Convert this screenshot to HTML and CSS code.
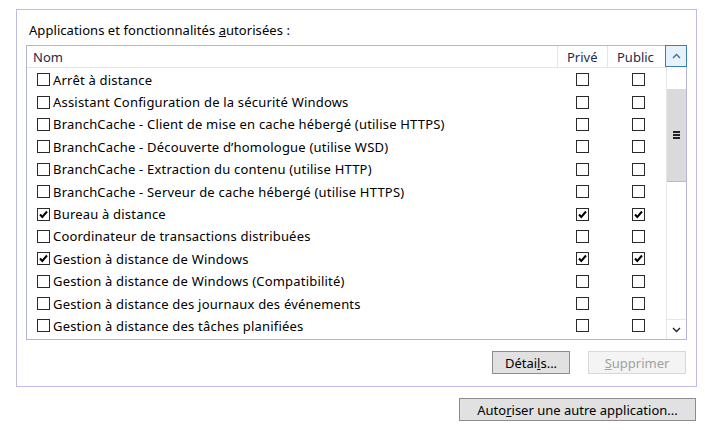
FILE: index.html
```html
<!DOCTYPE html>
<html lang="fr">
<head>
<meta charset="utf-8">
<title>Applications autorisées</title>
<link rel="stylesheet" href="styles.css">
</head>
<body>
<div class="page">
  <div class="group">
    <div class="title">Applications et fonctionnalités <u>a</u>utorisées :</div>
    <div class="list">
      <div class="table">
        <div class="head">
          <div class="c-name">Nom</div>
          <div class="c-priv">Privé</div>
          <div class="c-pub">Public</div>
        </div>
        <div class="row"><div class="c-name"><span class="cb"></span>Arrêt à distance</div><div class="c-priv"><span class="cb"></span></div><div class="c-pub"><span class="cb"></span></div></div>
        <div class="row"><div class="c-name"><span class="cb"></span>Assistant Configuration de la sécurité Windows</div><div class="c-priv"><span class="cb"></span></div><div class="c-pub"><span class="cb"></span></div></div>
        <div class="row"><div class="c-name"><span class="cb"></span>BranchCache - Client de mise en cache hébergé (utilise HTTPS)</div><div class="c-priv"><span class="cb"></span></div><div class="c-pub"><span class="cb"></span></div></div>
        <div class="row"><div class="c-name"><span class="cb"></span>BranchCache - Découverte d’homologue (utilise WSD)</div><div class="c-priv"><span class="cb"></span></div><div class="c-pub"><span class="cb"></span></div></div>
        <div class="row"><div class="c-name"><span class="cb"></span>BranchCache - Extraction du contenu (utilise HTTP)</div><div class="c-priv"><span class="cb"></span></div><div class="c-pub"><span class="cb"></span></div></div>
        <div class="row"><div class="c-name"><span class="cb"></span>BranchCache - Serveur de cache hébergé (utilise HTTPS)</div><div class="c-priv"><span class="cb"></span></div><div class="c-pub"><span class="cb"></span></div></div>
        <div class="row"><div class="c-name"><span class="cb"><svg viewBox="0 0 11 11" width="11" height="11"><path d="M2 5.5 L4.3 8 L9 2.5" fill="none" stroke="#000" stroke-width="2"/></svg></span>Bureau à distance</div><div class="c-priv"><span class="cb"><svg viewBox="0 0 11 11" width="11" height="11"><path d="M2 5.5 L4.3 8 L9 2.5" fill="none" stroke="#000" stroke-width="2"/></svg></span></div><div class="c-pub"><span class="cb"><svg viewBox="0 0 11 11" width="11" height="11"><path d="M2 5.5 L4.3 8 L9 2.5" fill="none" stroke="#000" stroke-width="2"/></svg></span></div></div>
        <div class="row"><div class="c-name"><span class="cb"></span>Coordinateur de transactions distribuées</div><div class="c-priv"><span class="cb"></span></div><div class="c-pub"><span class="cb"></span></div></div>
        <div class="row"><div class="c-name"><span class="cb"><svg viewBox="0 0 11 11" width="11" height="11"><path d="M2 5.5 L4.3 8 L9 2.5" fill="none" stroke="#000" stroke-width="2"/></svg></span>Gestion à distance de Windows</div><div class="c-priv"><span class="cb"><svg viewBox="0 0 11 11" width="11" height="11"><path d="M2 5.5 L4.3 8 L9 2.5" fill="none" stroke="#000" stroke-width="2"/></svg></span></div><div class="c-pub"><span class="cb"><svg viewBox="0 0 11 11" width="11" height="11"><path d="M2 5.5 L4.3 8 L9 2.5" fill="none" stroke="#000" stroke-width="2"/></svg></span></div></div>
        <div class="row"><div class="c-name"><span class="cb"></span>Gestion à distance de Windows (Compatibilité)</div><div class="c-priv"><span class="cb"></span></div><div class="c-pub"><span class="cb"></span></div></div>
        <div class="row"><div class="c-name"><span class="cb"></span>Gestion à distance des journaux des événements</div><div class="c-priv"><span class="cb"></span></div><div class="c-pub"><span class="cb"></span></div></div>
        <div class="row"><div class="c-name"><span class="cb"></span>Gestion à distance des tâches planifiées</div><div class="c-priv"><span class="cb"></span></div><div class="c-pub"><span class="cb"></span></div></div>
      </div>
      <div class="scroll">
        <div class="sb-up"><svg viewBox="0 0 9 6" width="9" height="6"><path d="M1 5 L4.5 1.5 L8 5" fill="none" stroke="#3a6ea5" stroke-width="1.4"/></svg></div>
        <div class="sb-track">
          <div class="thumb"><span class="grip"></span></div>
        </div>
        <div class="sb-down"><svg viewBox="0 0 9 6" width="9" height="6"><path d="M1 1 L4.5 4.5 L8 1" fill="none" stroke="#222" stroke-width="1.4"/></svg></div>
      </div>
    </div>
    <div class="actions">
      <button class="btn btn-details">Détai<u>l</u>s...</button>
      <button class="btn btn-remove" disabled><u>S</u>upprimer</button>
    </div>
  </div>
  <div class="bottom">
    <button class="btn btn-allow">Auto<u>r</u>iser une autre application...</button>
  </div>
</div>
</body>
</html>
```

FILE: styles.css
```css
* { box-sizing: border-box; }

body {
  margin: 0;
  background: #fff;
  font-family: "Noto Sans", "Open Sans", sans-serif;
  font-size: 13px;
  color: #000;
}

.page {
  padding: 9px 0 0 16px;
  width: 697px;
}

.group {
  width: 681px;
  height: 378px;
  border: 1px solid #bcbce4;
  padding: 12px 9px 0 9px;
}

.title {
  padding-left: 3px;
  line-height: 16px;
  height: 16px;
  letter-spacing: 0.06px;
}

.list {
  margin-top: 7px;
  height: 295px;
  border: 1px solid #b4b4dc;
  display: flex;
}

.table {
  flex: 1;
  overflow: hidden;
}

.head {
  display: flex;
  height: 22px;
  border-bottom: 1px solid #e5e5e5;
  color: #1c2b4a;
}

.head > div {
  line-height: 21px;
  padding-top: 1px;
}

.c-name {
  flex: 1;
  display: flex;
  align-items: center;
  white-space: nowrap;
}

.c-priv { width: 50px; }
.c-pub { width: 59px; }

.head .c-name { padding-left: 6px; }

.head .c-priv,
.head .c-pub {
  border-left: 1px solid #e5e5e5;
  padding-left: 9px;
}

.row {
  display: flex;
  height: 22.4px;
  align-items: center;
  padding-top: 1px;
}

.row .c-name {
  padding-left: 10px;
  letter-spacing: 0.2px;
}

.row .c-priv,
.row .c-pub {
  display: flex;
  justify-content: center;
}

.row .c-pub { padding-left: 3px; }

.cb {
  width: 13px;
  height: 13px;
  border: 1px solid #2b2b2b;
  background: #fff;
  display: inline-flex;
  flex: none;
}

.row .c-name .cb { margin-right: 3px; }

.cb svg { display: block; }

.scroll {
  width: 20px;
  display: flex;
  flex-direction: column;
  border-left: 1px solid #e6e6e6;
}

.sb-up {
  height: 22px;
  border: 1px solid #3c7fb1;
  background: #e5f1fb;
  margin: -1px -1px 0 -2px;
  display: flex;
  align-items: center;
  justify-content: center;
}

.sb-track {
  flex: 1;
  padding-top: 22px;
}

.thumb {
  height: 93px;
  background: #dadada;
  border-bottom: 1px solid #bdbdbd;
  display: flex;
  align-items: center;
  justify-content: center;
}

.grip {
  width: 7px;
  height: 8px;
  border-top: 2px solid #222;
  border-bottom: 2px solid #222;
  background: linear-gradient(#dadada 1px, #222 1px, #222 3px, #dadada 3px);
}

.sb-down {
  height: 20px;
  border-top: 1px solid #e6e6e6;
  display: flex;
  align-items: center;
  justify-content: center;
}

.actions {
  display: flex;
  justify-content: flex-end;
  gap: 18px;
  margin-top: 11px;
  padding-right: 1px;
}

.btn {
  height: 23px;
  border: 1px solid #8c8c8c;
  background: #e1e1e1;
  font: inherit;
  color: #000;
  padding: 0;
}

.btn-details { width: 78px; }

.btn-remove {
  width: 98px;
  background: #f4f4f4;
  border-color: #d9d9d9;
  color: #a0a0a0;
}

.bottom {
  display: flex;
  justify-content: flex-end;
  margin-top: 11px;
  padding-right: 1px;
}

.btn-allow { width: 237px; }
```
